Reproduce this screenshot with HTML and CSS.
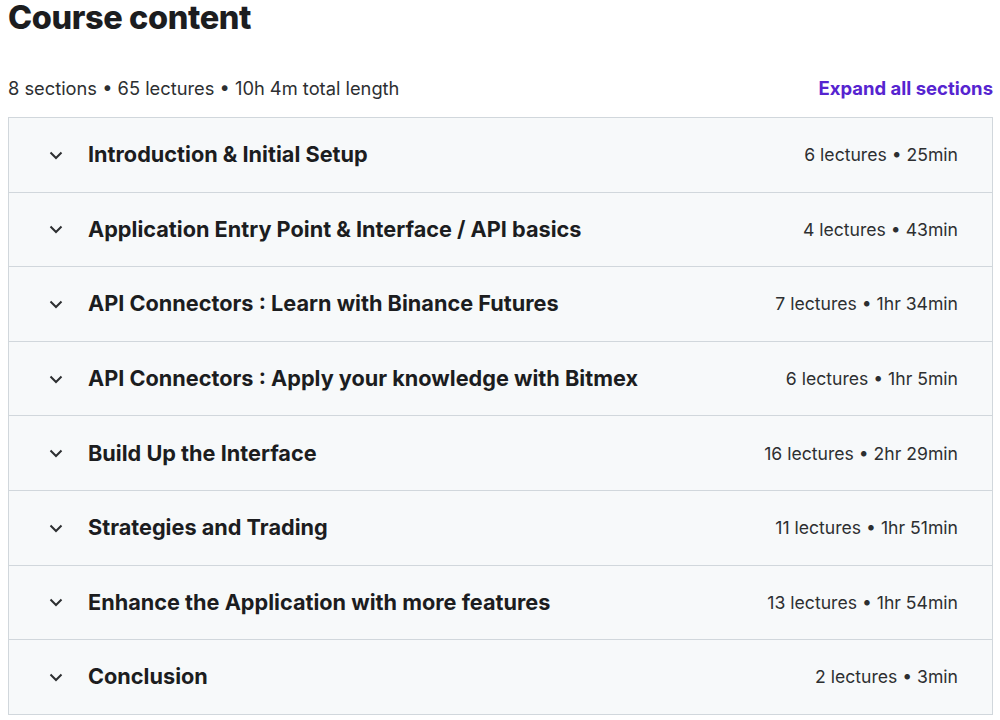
FILE: index.html
```html
<!DOCTYPE html>
<html lang="en">

<head>
  <meta charset="UTF-8">
  <title>Course content</title>
  <link rel="stylesheet" href="styles.css">
</head>

<body>
  <div class='page'>
    <h2 class='title'>Course content</h2>
    <div class='meta'>
      <span>8 sections • 65 lectures • 10h 4m total length</span>
      <a href="#" class='expand'>Expand all sections</a>
    </div>
    <div class='sections'>
      <div class='row'>
        <svg class='chev' viewBox="0 0 16 16"><path d="M2.5 5.5 L8 11 L13.5 5.5"/></svg>
        <span class='name'>Introduction &amp; Initial Setup</span>
        <span class='info'>6 lectures • 25min</span>
      </div>
      <div class='row'>
        <svg class='chev' viewBox="0 0 16 16"><path d="M2.5 5.5 L8 11 L13.5 5.5"/></svg>
        <span class='name'>Application Entry Point &amp; Interface / API basics</span>
        <span class='info'>4 lectures • 43min</span>
      </div>
      <div class='row'>
        <svg class='chev' viewBox="0 0 16 16"><path d="M2.5 5.5 L8 11 L13.5 5.5"/></svg>
        <span class='name'>API Connectors : Learn with Binance Futures</span>
        <span class='info'>7 lectures • 1hr 34min</span>
      </div>
      <div class='row'>
        <svg class='chev' viewBox="0 0 16 16"><path d="M2.5 5.5 L8 11 L13.5 5.5"/></svg>
        <span class='name'>API Connectors : Apply your knowledge with Bitmex</span>
        <span class='info'>6 lectures • 1hr 5min</span>
      </div>
      <div class='row'>
        <svg class='chev' viewBox="0 0 16 16"><path d="M2.5 5.5 L8 11 L13.5 5.5"/></svg>
        <span class='name'>Build Up the Interface</span>
        <span class='info'>16 lectures • 2hr 29min</span>
      </div>
      <div class='row'>
        <svg class='chev' viewBox="0 0 16 16"><path d="M2.5 5.5 L8 11 L13.5 5.5"/></svg>
        <span class='name'>Strategies and Trading</span>
        <span class='info'>11 lectures • 1hr 51min</span>
      </div>
      <div class='row'>
        <svg class='chev' viewBox="0 0 16 16"><path d="M2.5 5.5 L8 11 L13.5 5.5"/></svg>
        <span class='name'>Enhance the Application with more features</span>
        <span class='info'>13 lectures • 1hr 54min</span>
      </div>
      <div class='row'>
        <svg class='chev' viewBox="0 0 16 16"><path d="M2.5 5.5 L8 11 L13.5 5.5"/></svg>
        <span class='name'>Conclusion</span>
        <span class='info'>2 lectures • 3min</span>
      </div>
    </div>
  </div>
</body>
</html>
```

FILE: styles.css
```css
body {
  margin: 0;
  background: #fff;
  color: #2d2f31;
  font-family: Inter, "Noto Sans", sans-serif;
}
.page {
  padding: 0 7px 0 8px;
}
.title {
  margin: 0;
  font-size: 32.5px;
  font-weight: 800;
  line-height: 36px;
  letter-spacing: -0.4px;
  color: #1c1d1f;
}
.meta {
  display: flex;
  justify-content: space-between;
  align-items: center;
  margin-top: 40px;
  height: 24px;
  font-size: 18.3px;
}
.expand, .expand:visited {
  color: #5624d0;
  font-size: 18.5px;
  font-weight: 700;
  text-decoration: none;
}
.sections {
  margin-top: 17px;
  border: 1px solid #d1d7dc;
  border-bottom: none;
}
.row {
  display: flex;
  align-items: center;
  box-sizing: border-box;
  height: 74.6px;
  padding: 0 34px 0 39px;
  background: #f7f9fa;
  border-bottom: 1px solid #d1d7dc;
}
.chev {
  width: 16px;
  height: 16px;
  fill: none;
  stroke: #2d2f31;
  stroke-width: 2;
  margin-right: 24px;
}
.name {
  flex: 1;
  font-size: 21.7px;
  font-weight: 700;
  color: #1c1d1f;
  padding-bottom: 1px;
}
.info {
  font-size: 17.6px;
}
```
